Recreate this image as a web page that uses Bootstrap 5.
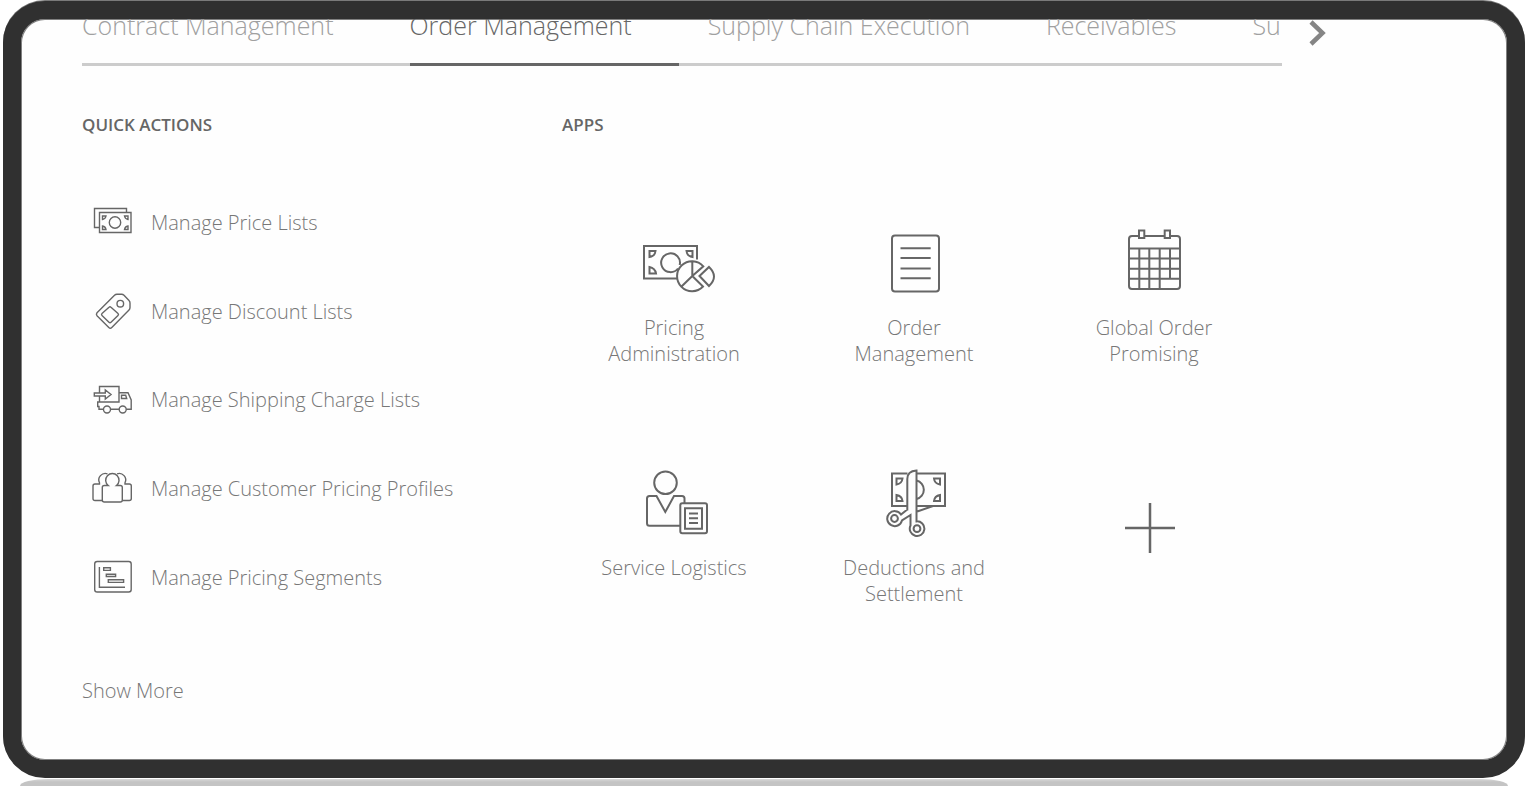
<!DOCTYPE html>
<html lang="en">
<head>
<meta charset="utf-8">
<meta name="viewport" content="width=device-width, initial-scale=1">
<title>Order Management</title>
<link href="https://cdn.jsdelivr.net/npm/bootstrap@5.3.0/dist/css/bootstrap.min.css" rel="stylesheet">
<style>
  body { font-family: "Open Sans", "Noto Sans", sans-serif; font-weight: 300; font-size: 20px; line-height: 26px; color: #777; background: #fff; }
  a { color: inherit; text-decoration: none; }
  svg { fill: none; stroke: #666; flex: none; display: block; }
  .device { margin: 1px 3px 0; border: 18px solid #303030; border-radius: 42px; background: #fefefe; box-shadow: 0 -1px 0 #7a7a7a, inset 0 0 0 1px #808080; }
  .device-shade { height: 7px; margin: 1px 20px 0; border-radius: 28px 28px 0 0 / 7px 7px 0 0; background: linear-gradient(#d8d8d8, #c4c4c4 3px); }
  .home { padding: 0 61px 52px; }
  .tab-strip { flex: 0 1 1200px; min-width: 0; margin-top: -13px; border-bottom: 3px solid #ccc; height: 60px; font-size: 25px; line-height: 38px; }
  .tab-strip a { display: block; flex: none; color: #a0a0a0; padding-right: 47px; margin-right: 29px; height: 60px; border-bottom: 3px solid transparent; white-space: nowrap; }
  .tab-strip a.active { color: #666; border-color: #666; }
  .tab-strip a:last-child { padding-right: 0; margin-right: 0; }
  .tab-clip { overflow: hidden; height: 60px; }
  .next-btn { margin-left: 27px; }
  .sections { margin-top: 47px; }
  .section-title { font-size: 17px; line-height: 24px; font-weight: 600; color: #666; margin: 0; }
  .quick { flex: 0 0 480px; }
  .quick-list { min-height: 443px; margin-top: 42px; }
  .quick-list a { gap: 19px; padding-left: 10px; }
  .more-link { display: inline-block; margin-top: 56px; }
  .apps-grid { width: 720px; margin: 88px 0 0 -8px; }
  .app-tile { height: 240px; }
  .app-tile svg { margin-bottom: 10px; stroke-width: 2; }
  .app-tile span { max-width: 160px; }
</style>
</head>
<body class="d-flex flex-column min-vh-100">
<main class="device flex-grow-1 overflow-hidden">
  <div class="home">
    <div class="d-flex align-items-start">
      <nav class="tab-strip" aria-label="Areas">
        <div class="tab-clip d-flex">
          <a href="#">Contract Management</a>
          <a href="#" class="active" aria-current="page">Order Management</a>
          <a href="#">Supply Chain Execution</a>
          <a href="#">Receivables</a>
          <a href="#">Su</a>
        </div>
      </nav>
      <button type="button" class="next-btn btn p-0 border-0" aria-label="Next areas">
        <svg width="18" height="28" viewBox="0 0 18 28" stroke-width="4.500"><path opacity=".8" d="M2 3L13.500 14L2 25"/></svg>
      </button>
    </div>
    <div class="sections d-flex flex-wrap flex-xl-nowrap">
      <section class="quick">
        <h2 class="section-title">QUICK ACTIONS</h2>
        <div class="quick-list d-flex flex-column">
          <a href="#" class="d-flex align-items-center flex-fill">
            <svg width="40" height="40" stroke-width="1.400"><path d="M7.500 24.500H2.500V5.500H34.500V9.500"/><path d="M7.500 9.500h31.500v20h-31.500z"/><circle cx="23" cy="19.500" r="5.700"/><path d="M10.500 13h3.500q-.5 3-3.500 3.500zM36 13h-3.500q.5 3 3.500 3.500zM10.500 26.500h3.500q-.5-3-3.500-3.500zM36 26.500h-3.500q.5-3 3.500-3.500z"/></svg>
            <span>Manage Price Lists</span></a>
          <a href="#" class="d-flex align-items-center flex-fill">
            <svg width="40" height="40" stroke-width="1.400" stroke-linejoin="round"><path d="M25 2.200H29.500Q31 2.200 32 3.200L37 8.500Q38 9.500 38 11V15.500Q38 17 37 18L19.800 35.500Q18.300 37 16.800 35.500L5 23.700Q3.800 22.200 5 20.700L22.500 3.200Q23.500 2.200 25 2.200Z"/><circle cx="28.300" cy="11.700" r="3.300"/><path d="M17 15.200Q18 14.200 19 15.200L26 21.500Q27 22.500 26 23.500L19 30.300Q18 31.300 17 30.300L10 23.500Q9 22.500 10 21.500Z"/></svg>
            <span>Manage Discount Lists</span></a>
          <a href="#" class="d-flex align-items-center flex-fill">
            <svg width="40" height="40" stroke-width="1.400"><path d="M7.500 13V6.500H27V22H7.500V16M27 12.700H36L39.200 20V29.300H34.200M27 12.700V22M27.200 29.300H18.500M11.500 29.300H7V26.500H5.700V22H7.500M29.500 15.300h4.200l1 3.200h-5.200z"/><path d="M2.300 13H13.300V10L19 14.500L13.300 19V16H2.300Z"/><circle cx="15" cy="29.500" r="3.500"/><circle cx="30.700" cy="29.500" r="3.500"/></svg>
            <span>Manage Shipping Charge Lists</span></a>
          <a href="#" class="d-flex align-items-center flex-fill">
            <svg width="40" height="40" stroke-width="1.400"><path d="M16.200 16.500A6.700 6.700 0 1 1 24.500 16.500H28.300Q30.300 16.500 30.300 18.500V31Q30.300 33 28.300 33H12.300Q10.300 33 10.300 31V18.500Q10.300 16.500 12.300 16.500Z"/><path d="M10.300 31.500H3Q1 31.500 1 29.500V17Q1 15 3 15H7.500V13.800A6.500 6.500 0 0 1 15.500 4.800M30.300 31.500H37.300Q39.300 31.500 39.300 29.500V17Q39.300 15 37.300 15H33V13.800A6.500 6.500 0 0 0 25 4.800"/></svg>
            <span>Manage Customer Pricing Profiles</span></a>
          <a href="#" class="d-flex align-items-center flex-fill">
            <svg width="40" height="40" stroke-width="1.400"><rect x="2.700" y="3.500" width="36.500" height="30.500" rx="2.500"/><path d="M7.400 9V29.300H33M11.700 9.700h6.700v2.700h-6.700zM14.300 16.300h9.300v2.200h-9.300zM16.300 21.700h15.300v2.700h-15.300z"/></svg>
            <span>Manage Pricing Segments</span></a>
        </div>
        <a href="#" class="more-link">Show More</a>
      </section>
      <section>
        <h2 class="section-title">APPS</h2>
        <div class="apps-grid row row-cols-3 g-0 text-center">
          <a href="#" class="app-tile d-flex flex-column align-items-center">
            <svg width="84" height="80"><path d="M46 53.500H12V21H65V34.500"/><path d="M46 43.500A9.400 9.400 0 1 1 47.700 40"/><path d="M17.500 26h6q-.5 5-6 6zM60.500 26h-6q.5 5 6 6zM17.500 48.500h6.500q-1-5.500-6.500-6.500z"/><path d="M71.300 41.300A15 15 0 1 0 71 61.500L60.300 51ZM60.300 36V51L49 62M67.500 51L77 42Q87 51.500 77 61Z"/></svg>
            <span>Pricing Administration</span></a>
          <a href="#" class="app-tile d-flex flex-column align-items-center">
            <svg width="84" height="80"><rect x="20" y="10.500" width="47" height="56" rx="3"/><path d="M28.500 23.300H58.700M28.500 33H58.700M28.500 43.500H58.700M28.500 53.300H58.700"/></svg>
            <span>Order Management</span></a>
          <a href="#" class="app-tile d-flex flex-column align-items-center">
            <svg width="84" height="80"><path d="M27 11H20Q17 11 17 14V61Q17 64 20 64H65Q68 64 68 61V14Q68 11 65 11H58M32.500 11H52.500M27 5.500h5.300v7.500h-5.300zM52.700 5.500h5.300v7.500h-5.300z"/><path d="M17 23.500H68M17 33.500H68M17 43.700H68M17 53.700H68M27.300 23.500V64M37.300 23.500V64M47.700 23.500V64M58 23.500V53.700"/></svg>
            <span>Global Order Promising</span></a>
          <a href="#" class="app-tile d-flex flex-column align-items-center">
            <svg width="84" height="80"><circle cx="33.500" cy="17.700" r="11.300"/><path d="M48 60.700H17.500Q15 60.700 15 58.200V33.500Q15 31 17.500 31H24.500L33.300 47L42 31H50Q52.500 31 52.500 33.500V38"/><rect x="48.300" y="38.300" width="26.700" height="30" rx="2"/><path d="M53 43.300h17v20.500h-17zM57 48.500H66M57 53.200H66M57 58H66"/></svg>
            <span>Service Logistics</span></a>
          <a href="#" class="app-tile d-flex flex-column align-items-center">
            <svg width="84" height="80"><path d="M35.300 41H20V8.500H35.500M44.500 8.500H73V41H44.500M44.500 15.500A9.500 9.500 0 0 1 44.500 34M24.500 13.500h6q-.5 5-6 6zM68 13.500h-6q.5 5 6 6zM24.500 36h6q-.5-5-6-6zM68 36h-6q.5-5 6-6z"/><path d="M35.300 45.500V14Q35.300 6 44.500 5.500V56.400A7.300 7.300 0 1 1 38.500 60.500V50L30 55.500A7.500 7.500 0 1 1 29 49.500L35.300 44.500M44.500 46.800L61 41"/><circle cx="22.500" cy="53.500" r="3.400"/><circle cx="45" cy="63.700" r="3.400"/></svg>
            <span>Deductions and Settlement</span></a>
          <button type="button" class="app-tile btn border-0 p-0 rounded-0 d-flex flex-column align-items-center" aria-label="Add app">
            <svg width="84" height="90"><path stroke-width="2.500" d="M13 63H63M38 38V88"/></svg>
          </button>
        </div>
      </section>
    </div>
  </div>
</main>
<div class="device-shade"></div>
<script src="https://cdn.jsdelivr.net/npm/bootstrap@5.3.0/dist/js/bootstrap.bundle.min.js"></script>
</body>
</html>
